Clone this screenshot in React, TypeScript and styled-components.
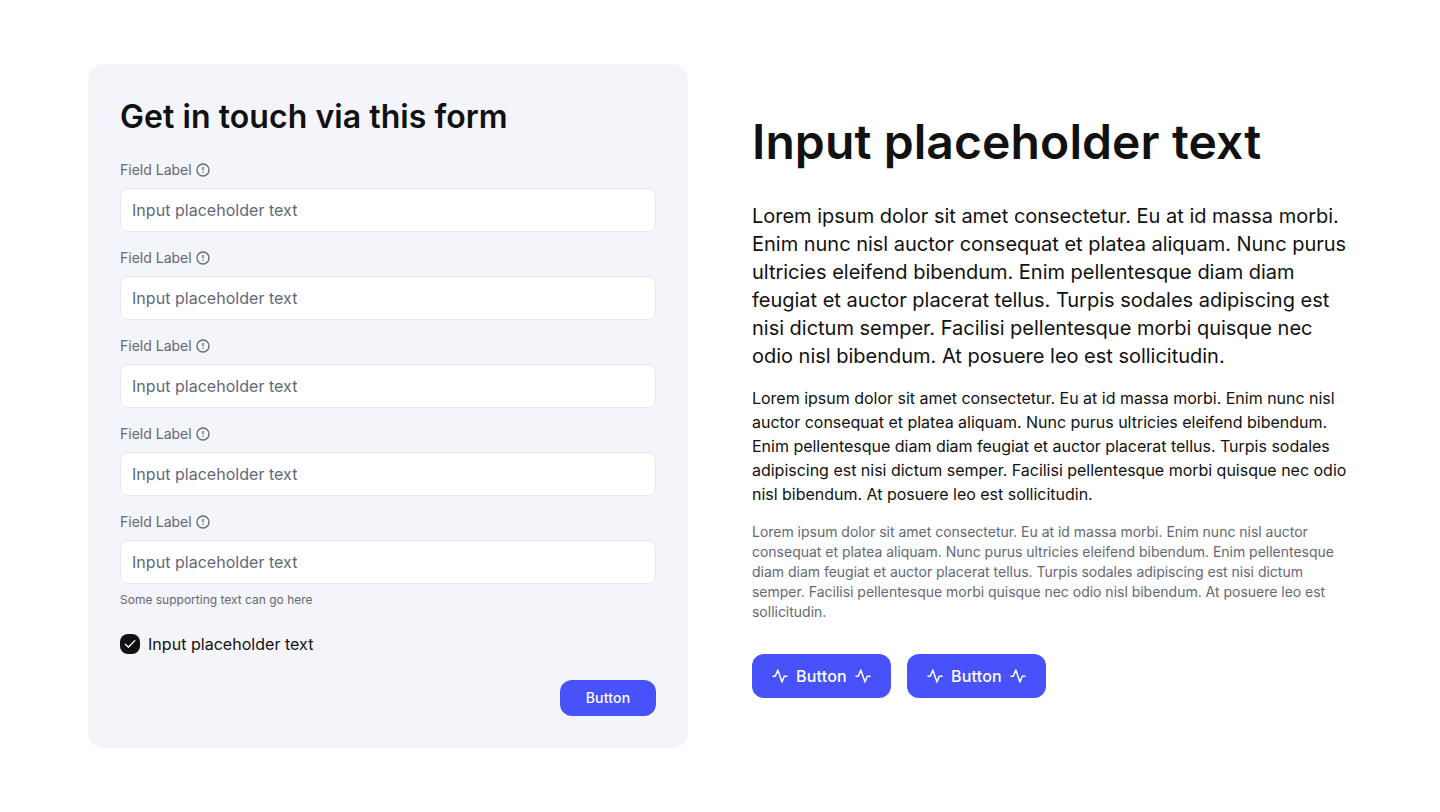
import React from 'react';
import styled, { createGlobalStyle } from 'styled-components';

const GlobalStyle = createGlobalStyle`
  *, *::before, *::after { box-sizing: border-box; }
  body { margin: 0; background: #fff; color: #111111; font-family: Inter, sans-serif; -webkit-font-smoothing: antialiased; }
  h1, h2, p { margin: 0; }
  button, input { font-family: inherit; }
`;

const Page = styled.main`
  display: flex;
  align-items: center;
  gap: 64px;
  padding: 64px 88px;
`;

const FormCard = styled.form`
  display: flex;
  flex-direction: column;
  width: 600px;
  height: 684px;
  padding: 32px;
  border-radius: 16px;
  background: #f4f5fa;
`;

const FormTitle = styled.h2`
  font-size: 32px;
  line-height: 42px;
  font-weight: 600;
  letter-spacing: 0.06px;
`;

const Fields = styled.div`
  display: flex;
  flex-direction: column;
  gap: 16px;
  margin-top: 22px;
`;

const Field = styled.div`
  display: flex;
  flex-direction: column;
  gap: 8px;
`;

const Label = styled.label`
  display: flex;
  align-items: center;
  gap: 3px;
  font-size: 14px;
  line-height: 20px;
  color: #646875;
`;

const Input = styled.input`
  height: 44px;
  padding: 0 11px;
  border: 1px solid #e6e8f0;
  border-radius: 8px;
  background: #fff;
  font-size: 16px;
  letter-spacing: 0.03px;
  outline: none;
  &::placeholder { color: #646875; opacity: 1; }
`;

const Hint = styled.p`
  font-size: 12px;
  line-height: 16px;
  color: #646875;
`;

const CheckRow = styled.div`
  display: flex;
  align-items: center;
  gap: 8px;
  margin-top: 24px;
  font-size: 16px;
  line-height: 24px;
  letter-spacing: 0.03px;
`;

const CheckBox = styled.span`
  display: flex;
  align-items: center;
  justify-content: center;
  width: 20px;
  height: 20px;
  border-radius: 8px;
  background: #111111;
`;

const Button = styled.button<{ $size: 'small' | 'large' }>`
  display: flex;
  align-items: center;
  justify-content: center;
  gap: 8px;
  width: ${(p) => (p.$size === 'small' ? 96 : 139)}px;
  height: ${(p) => (p.$size === 'small' ? 36 : 44)}px;
  padding: ${(p) => (p.$size === 'small' ? '0 0 1px' : '0')};
  border: 0;
  border-radius: 12px;
  background: #4852fa;
  color: #fff;
  font-size: ${(p) => (p.$size === 'small' ? 14 : 16)}px;
  font-weight: 500;
  letter-spacing: 0.18px;
`;

const FormActions = styled.div`
  display: flex;
  justify-content: flex-end;
  margin-top: 24px;
`;

const Content = styled.section`
  display: flex;
  flex-direction: column;
  width: 600px;
`;

const Title = styled.h1`
  font-size: 48px;
  line-height: 56px;
  font-weight: 600;
  letter-spacing: 0.1px;
  margin-bottom: 32px;
`;

const Paragraph = styled.p<{ $size: number; $line: number; $muted?: boolean }>`
  font-size: ${(p) => p.$size}px;
  line-height: ${(p) => p.$line}px;
  letter-spacing: -0.015px;
  color: ${(p) => (p.$muted ? '#646875' : '#111111')};
  & + & { margin-top: 16px; }
`;

const Actions = styled.div`
  display: flex;
  gap: 16px;
  margin-top: 32px;
`;

const InfoIcon = () => (
  <svg width="16" height="16" viewBox="0 0 16 16" fill="none" stroke="#646875" strokeWidth="1.3" strokeLinecap="round">
    <circle cx="8" cy="8" r="6" />
    <path d="M8 5.5v2.6" />
    <circle cx="8" cy="10.2" r=".7" fill="#646875" stroke="none" />
  </svg>
);

const CheckIcon = () => (
  <svg width="12" height="12" viewBox="0 0 12 12" fill="none" stroke="#fff" strokeWidth="1.3" strokeLinecap="round" strokeLinejoin="round">
    <path d="M1.4 6.2 4.4 9.2 10.8 2.6" />
  </svg>
);

const PulseIcon = () => (
  <svg width="16" height="16" viewBox="0 0 16 16" fill="none" stroke="#fff" strokeWidth="1.5" strokeLinecap="round" strokeLinejoin="round">
    <path d="M1 8.2h2.3L5.8 2l4.2 12 2.3-5.8H15" />
  </svg>
);

const fields = [1, 2, 3, 4, 5];
const lorem =
  'Lorem ipsum dolor sit amet consectetur. Eu at id massa morbi. Enim nunc nisl auctor consequat et platea aliquam. Nunc purus ultricies eleifend bibendum. Enim pellentesque diam diam feugiat et auctor placerat tellus. Turpis sodales adipiscing est nisi dictum semper. Facilisi pellentesque morbi quisque nec odio nisl bibendum. At posuere leo est sollicitudin.';

export default function App() {
  return (
    <>
      <GlobalStyle />
      <Page>
        <FormCard onSubmit={(e) => e.preventDefault()}>
          <FormTitle>Get in touch via this form</FormTitle>
          <Fields>
            {fields.map((n) => (
              <Field key={n}>
                <Label htmlFor={`field-${n}`}>
                  Field Label <InfoIcon />
                </Label>
                <Input id={`field-${n}`} placeholder="Input placeholder text" />
                {n === fields.length && <Hint>Some supporting text can go here</Hint>}
              </Field>
            ))}
          </Fields>
          <CheckRow>
            <CheckBox role="checkbox" aria-checked="true"><CheckIcon /></CheckBox>
            Input placeholder text
          </CheckRow>
          <FormActions>
            <Button $size="small">Button</Button>
          </FormActions>
        </FormCard>
        <Content>
          <Title>Input placeholder text</Title>
          <Paragraph $size={20} $line={28}>{lorem}</Paragraph>
          <Paragraph $size={16} $line={24}>{lorem}</Paragraph>
          <Paragraph $size={14} $line={20} $muted>{lorem}</Paragraph>
          <Actions>
            {[1, 2].map((n) => (
              <Button key={n} $size="large" type="button">
                <PulseIcon />Button<PulseIcon />
              </Button>
            ))}
          </Actions>
        </Content>
      </Page>
    </>
  );
}
